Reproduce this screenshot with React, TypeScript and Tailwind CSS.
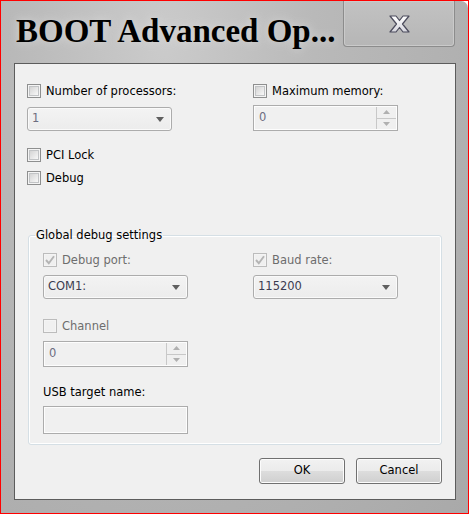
import React from "react";

const UI_FONT = "font-['DejaVu_Sans',sans-serif]";

function CheckBox({ checked = false, disabled = false }: { checked?: boolean; disabled?: boolean }): React.ReactElement {
	return (
		<div
			className={`w-[14px] h-[14px] shrink-0 border p-[1px] ${
				disabled ? "border-[#bcbcbc] bg-[#f4f4f4]" : "border-[#8e8f8f] bg-[#f4f4f4]"
			}`}
		>
			<div
				className={`w-full h-full relative ${
					disabled
						? "bg-[#f0f0f0]"
						: "border border-[#c2c4c6] bg-[linear-gradient(135deg,#d4d4d4,#f8f8f8)]"
				}`}
			>
				{checked && (
					<svg viewBox="0 0 12 12" className="absolute -left-[1px] -top-[1px] w-[12px] h-[12px]">
						<path d="M2 6 L4.8 9.2 L10 2.2" fill="none" stroke="#b4b4b4" strokeWidth="1.9" />
					</svg>
				)}
			</div>
		</div>
	);
}

function CheckRow({
	label,
	checked,
	disabled,
}: {
	label: string;
	checked?: boolean;
	disabled?: boolean;
}): React.ReactElement {
	return (
		<div className="flex items-center h-[14px] gap-[5px] whitespace-nowrap">
			<CheckBox checked={checked} disabled={disabled} />
			<span className={`text-[11.5px] leading-[14px] ${disabled ? "text-[#6d6d6d]" : "text-[#000000]"}`}>{label}</span>
		</div>
	);
}

function Combo({ value, dim }: { value: string; dim?: boolean }): React.ReactElement {
	return (
		<div className="w-[145px] h-[24px] rounded-[3px] border border-[#acacac] bg-[linear-gradient(#f3f3f3,#ececec)] shadow-[inset_0_0_0_1px_#fafafa] flex items-center justify-between pl-[4px] pr-[7px]">
			<span className={`text-[11.5px] ${dim ? "text-[#6d6d80]" : "text-[#3c3c50]"}`}>{value}</span>
			<svg viewBox="0 0 8 5" className="w-[8px] h-[5px]">
				<path d="M0 0 H8 L4 5 Z" fill="#5f5f5f" />
			</svg>
		</div>
	);
}

function SpinBox({ value }: { value: string }): React.ReactElement {
	return (
		<div className="w-[145px] h-[26px] border border-[#acacac] bg-[#f0f0f0] shadow-[inset_0_0_0_1px_#fdfdfd] flex">
			<div className="flex-1 flex items-center pl-[5px] text-[11.5px] text-[#6d6d80]">{value}</div>
			<div className="w-[20px] flex flex-col border-l border-[#c8c8c8] my-[1px] mr-[1px]">
				<div className="flex-1 flex items-center justify-center border-b border-[#c8c8c8] bg-[#f0f0f0]">
					<svg viewBox="0 0 7 4" className="w-[7px] h-[4px]">
						<path d="M0 4 H7 L3.5 0 Z" fill="#b0b0b0" />
					</svg>
				</div>
				<div className="flex-1 flex items-center justify-center bg-[#f0f0f0]">
					<svg viewBox="0 0 7 4" className="w-[7px] h-[4px]">
						<path d="M0 0 H7 L3.5 4 Z" fill="#b0b0b0" />
					</svg>
				</div>
			</div>
		</div>
	);
}

function PushButton({ label }: { label: string }): React.ReactElement {
	return (
		<button className="w-[86px] h-[26px] rounded-[3px] border border-[#707070] bg-[linear-gradient(#f2f2f2_0%,#ebebeb_50%,#dddddd_50%,#cfcfcf_100%)] shadow-[inset_0_0_0_1px_#fcfcfc] text-[11.5px] text-[#000000] flex items-center justify-center">
			{label}
		</button>
	);
}

export default function App(): React.ReactElement {
	return (
		<div className="w-[469px] h-[514px] border border-[#ff0000] bg-[#ffffff]">
			<div className="w-full h-full rounded-tr-[7px] bg-[radial-gradient(ellipse_at_35%_8%,#cbcbcb_0%,#b9b9b9_35%,#a9a9a9_100%)] flex flex-col">
				{/* Title bar */}
				<div className="h-[62px] flex items-start justify-between">
					<div className="pl-[15px] pt-[12px] font-['Liberation_Serif',serif] font-bold text-[33px] leading-[37px] text-[#000000] [text-shadow:0_0_10px_#dcdcdc]">
						BOOT Advanced Op...
					</div>
					<div className="mr-[13px] w-[112px] h-[46px] rounded-b-[4px] border border-t-0 border-[#8c8c8c] bg-[linear-gradient(#c2c2c2,#b6b6b6)] shadow-[inset_0_0_0_1px_#cacaca] flex items-center justify-center">
						<svg viewBox="0 0 21 18" className="w-[21px] h-[18px]">
							<defs>
								<linearGradient id="xg" x1="0" y1="0" x2="0" y2="1">
									<stop offset="0" stopColor="#ffffff" />
									<stop offset="1" stopColor="#d6d6de" />
								</linearGradient>
							</defs>
							<path
								d="M1 1 H7 L10.5 5.5 L14 1 H20 L13.5 9 L20 17 H14 L10.5 12.5 L7 17 H1 L7.5 9 Z"
								fill="url(#xg)"
								stroke="#4b4b5c"
								strokeWidth="1.2"
								strokeLinejoin="round"
							/>
						</svg>
					</div>
				</div>

				{/* Client area */}
				<div className={`ml-[13px] mr-[12px] h-[437px] border border-[#5c5c5c] bg-[#f0f0f0] ${UI_FONT} flex flex-col`}>
					<div className="pl-[12px] pt-[20px] flex">
						<div className="w-[145px] flex flex-col">
							<CheckRow label="Number of processors:" />
							<div className="mt-[9px]">
								<Combo value="1" dim />
							</div>
						</div>
						<div className="ml-[81px] w-[145px] flex flex-col">
							<CheckRow label="Maximum memory:" />
							<div className="mt-[7px]">
								<SpinBox value="0" />
							</div>
						</div>
					</div>

					<div className="pl-[12px] mt-[17px] flex flex-col gap-[9px]">
						<CheckRow label="PCI Lock" />
						<CheckRow label="Debug" />
					</div>

					<fieldset className="mx-[13px] mt-[44px] border border-[#d5dfe5] rounded-[3px] shadow-[inset_0_0_0_1px_#ffffff] pl-[14px] pb-[10px]">
						<legend className="ml-[-8px] px-[1px] text-[11.5px] leading-[13px] text-[#000000] whitespace-nowrap">Global debug settings</legend>
						<div className="pt-[11px] flex">
							<div className="w-[145px] flex flex-col">
								<CheckRow label="Debug port:" checked disabled />
								<div className="mt-[8px]">
									<Combo value="COM1:" />
								</div>
								<div className="mt-[20px]">
									<CheckRow label="Channel" disabled />
								</div>
								<div className="mt-[8px]">
									<SpinBox value="0" />
								</div>
								<div className="mt-[19px] text-[11.5px] leading-[13px] text-[#000000] whitespace-nowrap">USB target name:</div>
								<div className="mt-[7px] w-[145px] h-[28px] border border-[#acacac] bg-[#f0f0f0] shadow-[inset_0_0_0_1px_#fdfdfd]" />
							</div>
							<div className="ml-[65px] w-[145px] flex flex-col">
								<CheckRow label="Baud rate:" checked disabled />
								<div className="mt-[8px]">
									<Combo value="115200" />
								</div>
							</div>
						</div>
					</fieldset>

					<div className="mt-[13px] mr-[13px] flex justify-end gap-[11px]">
						<PushButton label="OK" />
						<PushButton label="Cancel" />
					</div>
				</div>
			</div>
		</div>
	);
}
